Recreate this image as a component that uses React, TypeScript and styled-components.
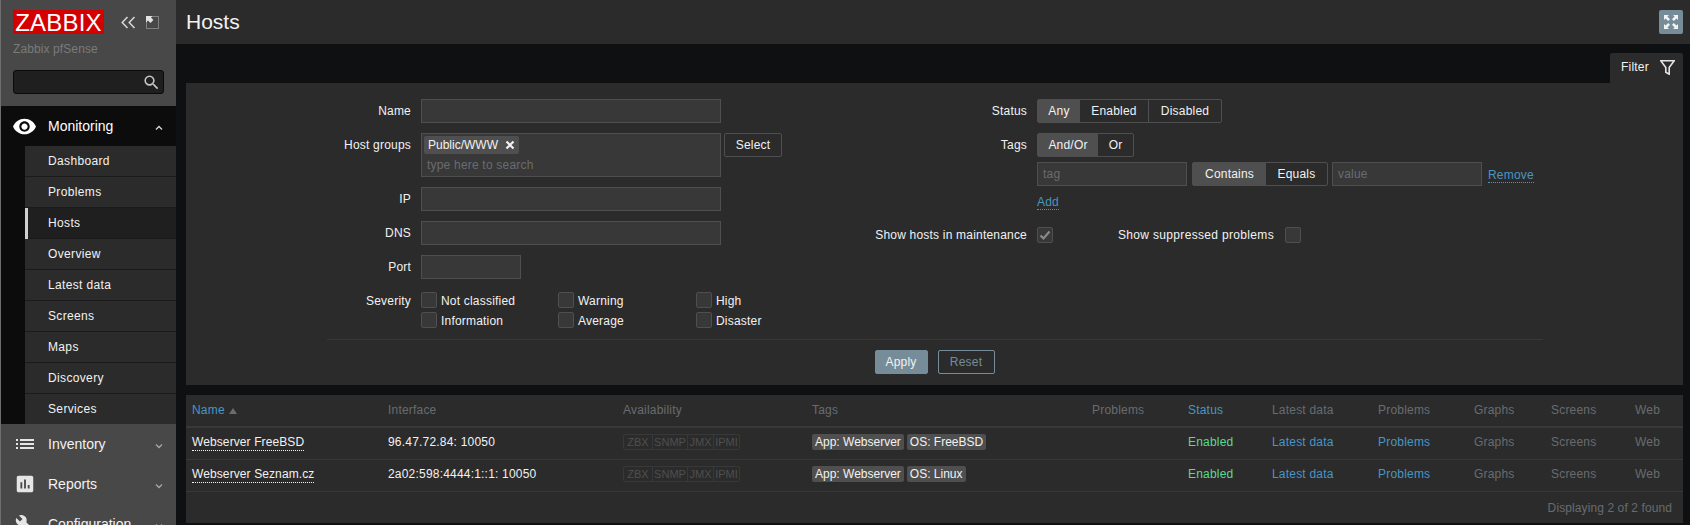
import React from "react";
import styled, { createGlobalStyle } from "styled-components";
import { MdAssessment, MdBuild, MdSearch, MdVisibility } from "react-icons/md";

const GlobalStyle = createGlobalStyle`
  html, body {
    margin: 0;
    height: 100%;
    overflow: hidden;
    background: #0e1012;
    color: #f2f2f2;
    font-family: "Liberation Sans", Arial, sans-serif;
    font-size: 12px;
    letter-spacing: 0.2px;
  }
  * {
    box-sizing: border-box;
  }
`;

const subMenu = ["Dashboard", "Problems", "Hosts", "Overview", "Latest data", "Screens", "Maps", "Discovery", "Services"];

const hosts = [
  { name: "Webserver FreeBSD", iface: "96.47.72.84: 10050", tags: ["App: Webserver", "OS: FreeBSD"] },
  { name: "Webserver Seznam.cz", iface: "2a02:598:4444:1::1: 10050", tags: ["App: Webserver", "OS: Linux"] },
];

const columns = [196, 235, 189, 280, 96, 84, 106, 96, 77, 84, 54];

const Chevron = ({ up }: { up?: boolean }) => (
  <ChevronBox $up={up} viewBox="0 0 8 6" width="8" height="6">
    <polyline points={up ? "1,4.5 4,1.5 7,4.5" : "1,1.5 4,4.5 7,1.5"} fill="none" stroke="currentColor" strokeWidth="1.3" />
  </ChevronBox>
);

const App: React.FC = () => {
  return (
    <Page>
      <GlobalStyle />
      <Sidebar>
        <Brand>
          <LogoRow>
            <Logo>ZABBIX</Logo>
            <svg viewBox="0 0 15 13" width="15" height="13">
              <polyline points="6.5,1 1.2,6.5 6.5,12" fill="none" stroke="#d8d8d8" strokeWidth="1.5" />
              <polyline points="13.5,1 8.2,6.5 13.5,12" fill="none" stroke="#d8d8d8" strokeWidth="1.5" />
            </svg>
            <svg viewBox="0 0 13 13" width="13" height="13">
              <rect x="0.5" y="0.5" width="12" height="12" fill="none" stroke="#bdbdbd" strokeDasharray="1 1" />
              <path d="M0 0h6.5L5 1.6 7.4 4 4.4 7 2 4.6 0 6.5z" fill="#e4e4e4" />
            </svg>
          </LogoRow>
          <ServerName>Zabbix pfSense</ServerName>
          <SearchBox>
            <MdSearch size={19} color="#c4c4c4" />
          </SearchBox>
        </Brand>
        <NavHead $open>
          <NavIcon>
            <MdVisibility size={25} color="#fff" />
          </NavIcon>
          <NavLabel>Monitoring</NavLabel>
          <Chevron up />
        </NavHead>
        <SubList>
          {subMenu.map((item) => (
            <SubItem key={item} $active={item === "Hosts"}>
              {item}
            </SubItem>
          ))}
        </SubList>
        <NavHead>
          <NavIcon>
            <svg viewBox="0 0 18 10" width="18" height="10">
              <path d="M0 0h2v2H0zM4 0h14v2H4zM0 4h2v2H0zM4 4h14v2H4zM0 8h2v2H0zM4 8h14v2H4z" fill="#e6e6e6" />
            </svg>
          </NavIcon>
          <NavLabel>Inventory</NavLabel>
          <Chevron />
        </NavHead>
        <NavHead>
          <NavIcon>
            <MdAssessment size={22} color="#e6e6e6" />
          </NavIcon>
          <NavLabel>Reports</NavLabel>
          <Chevron />
        </NavHead>
        <NavHead>
          <NavIcon>
            <MdBuild size={20} color="#e6e6e6" />
          </NavIcon>
          <NavLabel>Configuration</NavLabel>
          <Chevron />
        </NavHead>
      </Sidebar>

      <Main>
        <Header>
          <Title>Hosts</Title>
          <FullscreenButton>
            <svg viewBox="0 0 16 16" width="16" height="16">
              <path d="M1 1h5L4.4 2.6 7 5.2 5.2 7 2.6 4.4 1 6zM15 1v5l-1.6-1.6L10.8 7 9 5.2l2.6-2.6L10 1zM1 15v-5l1.6 1.6L5.2 9 7 10.8l-2.6 2.6L6 15zM15 15h-5l1.6-1.6L9 10.8 10.8 9l2.6 2.6L15 10z" fill="#f2f2f2" />
            </svg>
          </FullscreenButton>
        </Header>
        <Content>
          <TabBar>
            <FilterTab>
              Filter
              <svg viewBox="0 0 15 15" width="15" height="15">
                <path d="M0.8 0.8h13.4L9.2 7.4V14.2L5.8 12.2V7.4z" fill="none" stroke="#e4e4e4" strokeWidth="1.6" />
              </svg>
            </FilterTab>
          </TabBar>
          <FilterPanel>
            <FilterColumns>
              <LeftForm>
                <FieldLabel>Name</FieldLabel>
                <TextInput />
                <FieldLabel>Host groups</FieldLabel>
                <HostGroupRow>
                  <MultiSelect>
                    <Chip>
                      Public/WWW
                      <svg viewBox="0 0 10 10" width="10" height="10">
                        <path d="M1.5 1.5l7 7M8.5 1.5l-7 7" fill="none" stroke="#f2f2f2" strokeWidth="2.2" />
                      </svg>
                    </Chip>
                    <MultiHint>type here to search</MultiHint>
                  </MultiSelect>
                  <SelectButton>Select</SelectButton>
                </HostGroupRow>
                <FieldLabel>IP</FieldLabel>
                <TextInput />
                <FieldLabel>DNS</FieldLabel>
                <TextInput />
                <FieldLabel>Port</FieldLabel>
                <TextInput $width={100} />
                <SeverityLabel>Severity</SeverityLabel>
                <SeverityGrid>
                  {["Not classified", "Warning", "High", "Information", "Average", "Disaster"].map((s) => (
                    <CheckLabel key={s}>
                      <Checkbox />
                      {s}
                    </CheckLabel>
                  ))}
                </SeverityGrid>
              </LeftForm>
              <RightForm>
                <FieldLabel>Status</FieldLabel>
                <Segments>
                  <Segment $active $width={43}>Any</Segment>
                  <Segment $width={68}>Enabled</Segment>
                  <Segment $width={73}>Disabled</Segment>
                </Segments>
                <FieldLabel>Tags</FieldLabel>
                <TagsBlock>
                  <Segments>
                    <Segment $active $width={61}>And/Or</Segment>
                    <Segment $width={35}>Or</Segment>
                  </Segments>
                  <TagRow>
                    <TextInput $width={150}>
                      <Placeholder>tag</Placeholder>
                    </TextInput>
                    <Segments>
                      <Segment $active $width={74}>Contains</Segment>
                      <Segment $width={61}>Equals</Segment>
                    </Segments>
                    <ValueInput $width={150}>
                      <Placeholder>value</Placeholder>
                    </ValueInput>
                    <RemoveLink>Remove</RemoveLink>
                  </TagRow>
                  <AddRow>
                    <ActionLink>Add</ActionLink>
                  </AddRow>
                </TagsBlock>
                <FieldLabel>Show hosts in maintenance</FieldLabel>
                <MaintenanceRow>
                  <Checkbox>
                    <svg viewBox="0 0 12 12" width="12" height="12">
                      <path d="M1.5 6.5l3 3 6-7" fill="none" stroke="#8a8a8a" strokeWidth="2.2" />
                    </svg>
                  </Checkbox>
                  <SuppressLabel>Show suppressed problems</SuppressLabel>
                  <Checkbox />
                </MaintenanceRow>
              </RightForm>
            </FilterColumns>
            <FormDivider />
            <FormButtons>
              <ApplyButton>Apply</ApplyButton>
              <ResetButton>Reset</ResetButton>
            </FormButtons>
          </FilterPanel>

          <TablePanel>
            <HostTable>
              <colgroup>
                {columns.map((w, i) => (
                  <col key={i} style={{ width: w }} />
                ))}
              </colgroup>
              <thead>
                <tr>
                  <Th $link>
                    Name <SortArrow />
                  </Th>
                  <Th>Interface</Th>
                  <Th>Availability</Th>
                  <Th>Tags</Th>
                  <Th>Problems</Th>
                  <Th $link>Status</Th>
                  <Th>Latest data</Th>
                  <Th>Problems</Th>
                  <Th>Graphs</Th>
                  <Th>Screens</Th>
                  <Th>Web</Th>
                </tr>
              </thead>
              <tbody>
                {hosts.map((h) => (
                  <tr key={h.name}>
                    <Td>
                      <HostName>{h.name}</HostName>
                    </Td>
                    <Td>{h.iface}</Td>
                    <Td>
                      <Availability>
                        <AvailItem $width={28}>ZBX</AvailItem>
                        <AvailItem $width={35}>SNMP</AvailItem>
                        <AvailItem $width={26}>JMX</AvailItem>
                        <AvailItem $width={26}>IPMI</AvailItem>
                      </Availability>
                    </Td>
                    <Td>
                      {h.tags.map((t) => (
                        <TagChip key={t}>{t}</TagChip>
                      ))}
                    </Td>
                    <Td />
                    <Td $color="#59db8f">Enabled</Td>
                    <Td $color="#4796c4">Latest data</Td>
                    <Td $color="#4796c4">Problems</Td>
                    <Td $color="#686c71">Graphs</Td>
                    <Td $color="#686c71">Screens</Td>
                    <Td $color="#686c71">Web</Td>
                  </tr>
                ))}
              </tbody>
            </HostTable>
            <TableFooter>Displaying 2 of 2 found</TableFooter>
          </TablePanel>
        </Content>
      </Main>
    </Page>
  );
};

const Page = styled.div`
  display: flex;
  width: 1690px;
  height: 525px;
  overflow: hidden;
`;

const Sidebar = styled.aside`
  flex: 0 0 176px;
  height: 525px;
  overflow: hidden;
  background: #484848;
  border-left: 1px solid #6e6e6e;
`;

const Brand = styled.div`
  height: 106px;
  padding: 10px 12px 0 12px;
`;

const LogoRow = styled.div`
  display: flex;
  align-items: center;
  height: 24px;

  svg:nth-child(2) {
    margin: 0 10px 0 17px;
  }
`;

const Logo = styled.div`
  width: 91px;
  height: 24px;
  background: #d40000;
  color: #fff;
  font-size: 24px;
  line-height: 25px;
  letter-spacing: 0.2px;
  text-align: center;
`;

const ServerName = styled.div`
  margin-top: 8px;
  height: 14px;
  line-height: 14px;
  color: #7a7a7a;
  letter-spacing: 0.1px;
`;

const SearchBox = styled.div`
  display: flex;
  align-items: center;
  justify-content: flex-end;
  width: 151px;
  height: 24px;
  margin-top: 14px;
  padding-right: 2px;
  background: #1f1f1f;
  border: 1px solid #0a0a0a;
  border-radius: 3px;
`;

const NavHead = styled.div<{ $open?: boolean }>`
  display: flex;
  align-items: center;
  height: 40px;
  padding-right: 13px;
  background: ${(p) => (p.$open ? "#0c0c0c" : "transparent")};
  color: ${(p) => (p.$open ? "#fff" : "#f2f2f2")};
`;

const NavIcon = styled.span`
  display: flex;
  align-items: center;
  justify-content: center;
  width: 47px;
`;

const NavLabel = styled.span`
  flex: 1;
  font-size: 14px;
  letter-spacing: 0;
`;

const ChevronBox = styled.svg<{ $up?: boolean }>`
  color: ${(p) => (p.$up ? "#d8d8d8" : "#a8a8a8")};
  margin-top: 3px;
`;

const SubList = styled.div`
  padding-left: 24px;
  background: #0c0c0c;
`;

const SubItem = styled.div<{ $active?: boolean }>`
  height: 31px;
  line-height: 30px;
  padding-left: ${(p) => (p.$active ? "20px" : "23px")};
  background: ${(p) => (p.$active ? "#1f1f1f" : "#2b2b2b")};
  border-left: ${(p) => (p.$active ? "3px solid #cfcfcf" : "none")};
  box-shadow: inset 0 -1px 0 #1a1a1a;
  color: #f2f2f2;
  letter-spacing: 0.35px;

  &:last-child {
    height: 30px;
    box-shadow: none;
  }
`;

const Main = styled.main`
  flex: 1;
  min-width: 0;
`;

const Header = styled.header`
  display: flex;
  align-items: center;
  justify-content: space-between;
  height: 44px;
  padding: 0 7px 0 10px;
  background: #2b2b2b;
`;

const Title = styled.h1`
  margin: 0;
  font-size: 21px;
  font-weight: normal;
  letter-spacing: 0;
  color: #f2f2f2;
`;

const FullscreenButton = styled.button`
  display: flex;
  align-items: center;
  justify-content: center;
  width: 24px;
  height: 24px;
  padding: 0;
  background: #768d99;
  border: none;
  border-radius: 2px;
`;

const Content = styled.div`
  padding: 9px 7px 0 10px;
`;

const TabBar = styled.div`
  display: flex;
  justify-content: flex-end;
`;

const FilterTab = styled.div`
  display: flex;
  align-items: center;
  gap: 11px;
  width: 73px;
  height: 30px;
  padding: 0 0 2px 11px;
  background: #2b2b2b;
  border-radius: 2px 2px 0 0;
`;

const FilterPanel = styled.section`
  height: 302px;
  padding-top: 16px;
  background: #2b2b2b;
`;

const FilterColumns = styled.div`
  display: flex;
  height: 240px;
`;

const LeftForm = styled.div`
  display: grid;
  flex: 0 0 660px;
  grid-template-columns: 225px 1fr;
  grid-auto-rows: min-content;
  column-gap: 10px;
  row-gap: 10px;
`;

const RightForm = styled.div`
  display: grid;
  flex: 1;
  grid-template-columns: 181px 1fr;
  grid-auto-rows: min-content;
  column-gap: 10px;
  row-gap: 10px;
`;

const FieldLabel = styled.label`
  height: 24px;
  line-height: 24px;
  text-align: right;
  color: #f2f2f2;
  white-space: nowrap;
`;

const SeverityLabel = styled(FieldLabel)`
  margin-top: 3px;
  height: 16px;
  line-height: 18px;
`;

const TextInput = styled.div<{ $width?: number }>`
  flex: none;
  width: ${(p) => p.$width ?? 300}px;
  height: 24px;
  padding: 0 5px;
  line-height: 22px;
  background: #383838;
  border: 1px solid #4f4f4f;
`;

const ValueInput = styled(TextInput)`
  margin-left: -1px;
`;

const Placeholder = styled.span`
  color: #686c71;
`;

const HostGroupRow = styled.div`
  display: flex;
  align-items: flex-start;
  gap: 3px;
`;

const MultiSelect = styled.div`
  width: 300px;
  height: 44px;
  padding: 2px;
  background: #383838;
  border: 1px solid #4f4f4f;
`;

const Chip = styled.span`
  display: inline-flex;
  align-items: center;
  gap: 7px;
  height: 18px;
  padding: 0 4px;
  background: #4f4f4f;
  border-radius: 2px;
  letter-spacing: 0;
`;

const MultiHint = styled.div`
  margin: 4px 0 0 3px;
  line-height: 14px;
  color: #686c71;
`;

const SelectButton = styled.button`
  width: 58px;
  height: 24px;
  padding: 0;
  font: inherit;
  letter-spacing: inherit;
  color: #f2f2f2;
  background: #2b2b2b;
  border: 1px solid #4f4f4f;
  border-radius: 2px;
`;

const SeverityGrid = styled.div`
  display: grid;
  grid-template-columns: 137px 138px 100px;
  row-gap: 4px;
  margin-top: 3px;
`;

const CheckLabel = styled.label`
  display: flex;
  align-items: flex-start;
  gap: 4px;
  height: 16px;
  line-height: 18px;
  color: #f2f2f2;
`;

const Checkbox = styled.span`
  display: flex;
  align-items: center;
  justify-content: center;
  flex: none;
  width: 16px;
  height: 16px;
  background: #383838;
  border: 1px solid #4f4f4f;
  border-radius: 2px;
`;

const Segments = styled.div`
  display: flex;
  flex: none;
  width: fit-content;
  height: 24px;
  border: 1px solid #4f4f4f;
  border-radius: 2px;
`;

const Segment = styled.span<{ $active?: boolean; $width: number }>`
  width: ${(p) => p.$width - (p.$active ? 1 : 0)}px;
  line-height: 22px;
  text-align: center;
  background: ${(p) => (p.$active ? "#4f4f4f" : "transparent")};
  border-left: ${(p) => (p.$active ? "none" : "1px solid #4f4f4f")};
  color: #f2f2f2;

  &:nth-child(2) {
    border-left: none;
  }
`;

const TagsBlock = styled.div`
  display: flex;
  flex-direction: column;
  gap: 5px;
  height: 80px;
`;

const TagRow = styled.div`
  display: flex;
  align-items: center;
  gap: 5px;
`;

const ActionLink = styled.span`
  color: #4796c4;
  border-bottom: 1px dotted #4796c4;
  line-height: 13px;
`;

const RemoveLink = styled(ActionLink)`
  margin: 4px 0 0 1px;
`;

const AddRow = styled.div`
  display: flex;
  margin-top: 5px;
  line-height: 14px;
`;

const MaintenanceRow = styled.div`
  display: flex;
  align-items: center;
  height: 24px;
`;

const SuppressLabel = styled.span`
  width: 232px;
  padding-right: 11px;
  text-align: right;
  white-space: nowrap;
  letter-spacing: 0.33px;
`;

const FormDivider = styled.hr`
  width: 1216px;
  height: 1px;
  margin: 0 auto;
  border: none;
  background: #383838;
`;

const FormButtons = styled.div`
  display: flex;
  justify-content: center;
  gap: 10px;
  padding-top: 10px;
`;

const ApplyButton = styled.button`
  width: 53px;
  height: 24px;
  padding: 0;
  font: inherit;
  letter-spacing: inherit;
  color: #f2f2f2;
  background: #768d99;
  border: 1px solid #768d99;
  border-radius: 2px;
`;

const ResetButton = styled.button`
  width: 57px;
  height: 24px;
  padding: 0;
  font: inherit;
  letter-spacing: inherit;
  color: #768d99;
  background: transparent;
  border: 1px solid #768d99;
  border-radius: 2px;
`;

const TablePanel = styled.section`
  margin-top: 10px;
  height: 128px;
  background: #2b2b2b;
`;

const HostTable = styled.table`
  width: 1497px;
  table-layout: fixed;
  border-collapse: collapse;
`;

const Th = styled.th<{ $link?: boolean }>`
  height: 32px;
  padding: 0 6px 2px;
  font-weight: normal;
  text-align: left;
  color: ${(p) => (p.$link ? "#4796c4" : "#686c71")};
  border-bottom: 2px solid #383838;
`;

const SortArrow = styled.span`
  display: inline-block;
  width: 0;
  height: 0;
  margin-left: 1px;
  border-left: 4px solid transparent;
  border-right: 4px solid transparent;
  border-bottom: 6px solid #686c71;
`;

const Td = styled.td<{ $color?: string }>`
  height: 32px;
  padding: 0 6px 2px;
  color: ${(p) => p.$color ?? "#f2f2f2"};
  border-bottom: 1px solid #383838;
`;

const HostName = styled.span`
  padding-bottom: 1px;
  border-bottom: 1px dotted #f2f2f2;
  letter-spacing: 0.1px;
`;

const Availability = styled.div`
  display: flex;
  width: fit-content;
  height: 16px;
  border: 1px solid #383838;
  border-radius: 2px;
`;

const AvailItem = styled.span<{ $width: number }>`
  width: ${(p) => p.$width}px;
  font-size: 11px;
  line-height: 14px;
  letter-spacing: 0;
  text-align: center;
  color: #4f4f4f;

  & + & {
    border-left: 1px solid #383838;
  }
`;

const TagChip = styled.span`
  display: inline-block;
  height: 16px;
  margin-right: 3px;
  padding: 0 3px;
  line-height: 16px;
  letter-spacing: 0;
  background: #4f4f4f;
  border-radius: 2px;
  color: #f2f2f2;
`;

const TableFooter = styled.div`
  padding: 9px 11px 0 0;
  text-align: right;
  color: #686c71;
  letter-spacing: 0.1px;
`;

export default App;
